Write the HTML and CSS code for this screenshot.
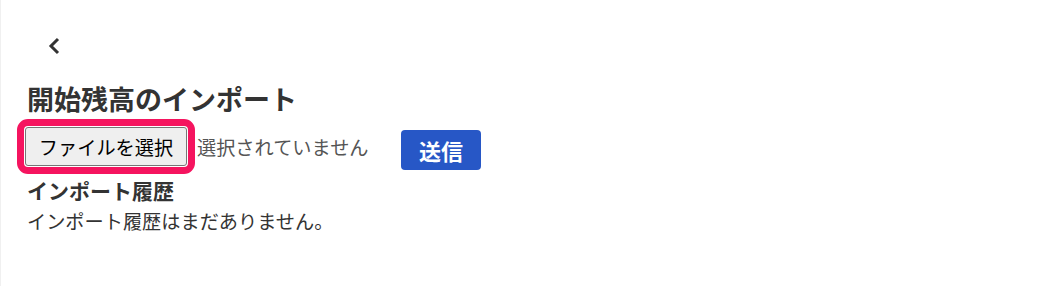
FILE: index.html
```html
<!DOCTYPE html>
<html lang="ja">
<head>
<meta charset="utf-8">
<title>開始残高のインポート</title>
<link rel="stylesheet" href="styles.css">
</head>
<body>
<div class="page">
  <button class="back" type="button" aria-label="戻る">
    <svg width="14" height="20" viewBox="0 0 14 20"><polyline points="11,3 4,10 11,17" fill="none" stroke="#333" stroke-width="3"/></svg>
  </button>
  <h1 class="title">開始残高のインポート</h1>
  <form class="upload-row">
    <div class="file">
      <span class="file-btn">ファイルを選択</span>
      <span class="file-status">選択されていません</span>
    </div>
    <button class="submit" type="button">送信</button>
  </form>
  <h2 class="subtitle">インポート履歴</h2>
  <p class="empty">インポート履歴はまだありません。</p>
</div>
</body>
</html>
```
FILE: styles.css
```css
* { box-sizing: border-box; }
html, body { margin: 0; background: #fff; }
body {
  font-family: "Noto Sans CJK JP", "Noto Sans", sans-serif;
  color: #333;
}
.page {
  min-height: 100vh;
  border-left: 1px solid #f0f0f0;
  padding: 26px 0 0 26px;
}
.back {
  display: flex;
  align-items: center;
  justify-content: center;
  width: 40px;
  height: 40px;
  margin: 0 0 0 7px;
  padding: 0;
  border: none;
  background: transparent;
}
.title {
  margin: 16px 0 0;
  font-size: 27px;
  line-height: 34px;
  font-weight: 700;
  color: #333;
}
.upload-row {
  display: flex;
  align-items: flex-start;
  margin: 11px 0 0 -2px;
}
.file {
  display: flex;
  align-items: center;
  width: 376px;
}
.file-btn {
  display: flex;
  align-items: center;
  justify-content: center;
  width: 162px;
  height: 39px;
  border: 1px solid #767676;
  border-radius: 3px;
  background: #efefef;
  color: #000;
  font-size: 19.2px;
  outline: 7px solid #f5145f;
  outline-offset: 1px;
}
.file-status {
  margin-left: 10px;
  font-size: 19.2px;
  color: #555;
}
.submit {
  margin-top: 3px;
  width: 80px;
  height: 40px;
  border: none;
  border-radius: 4px;
  background: #2757c6;
  color: #fff;
  font-family: inherit;
  font-size: 22px;
  font-weight: 700;
  padding: 0;
}
.subtitle {
  margin: 6px 0 0;
  font-size: 21px;
  line-height: 28px;
  font-weight: 700;
  color: #333;
}
.empty {
  margin: 4px 0 0;
  font-size: 19.2px;
  line-height: 26px;
  color: #333;
}
```
